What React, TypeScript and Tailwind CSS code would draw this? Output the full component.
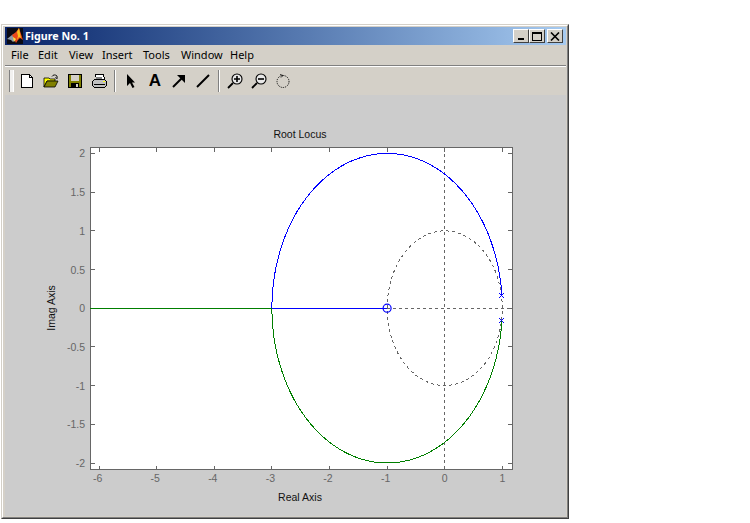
// MATLAB "Figure No. 1" window with a root locus plot.
const menus = ["File", "Edit", "View", "Insert", "Tools", "Window", "Help"];
const menuGap = ["w-[27px]", "w-[31px]", "w-[33px]", "w-[41px]", "w-[38px]", "w-[49px]", "w-[36px]"];

const toX = (x: number) => 444.7 + 57.6 * x;
const toY = (y: number) => 308.2 - 77.4 * y;

// locus is a circle of radius 2 round s = -1, sampled coarsely like the original
const arc = (sign: number) => {
  const pts: string[] = [];
  for (let deg = 180; deg > 4.7; deg -= 3.5) {
    const t = (deg * Math.PI) / 180;
    pts.push(`${toX(-1 + 2 * Math.cos(t)).toFixed(1)},${toY(sign * 2 * Math.sin(t)).toFixed(1)}`);
  }
  pts.push(`${toX(0.993).toFixed(1)},${toY(sign * 0.165).toFixed(1)}`);
  return pts.join(" ");
};

const unitCircle = Array.from({ length: 73 }, (_, i) => {
  const t = (i * 5 * Math.PI) / 180;
  return `${toX(Math.cos(t)).toFixed(1)},${toY(Math.sin(t)).toFixed(1)}`;
}).join(" ");

const xTicks = [-6, -5, -4, -3, -2, -1, 0, 1];
const yTicks = [2, 1.5, 1, 0.5, 0, -0.5, -1, -1.5, -2];

const L = 90;
const R = 512.5;
const T = 147.5;
const B = 469.5;

function RootLocus() {
  return (
    <svg viewBox="5 95 561 421" className="block h-full w-full" style={{ fontFamily: '"Liberation Sans", Arial, sans-serif' }}>
      <rect x={L} y={T} width={R - L} height={B - T} fill="#ffffff" stroke="#666666" shapeRendering="crispEdges" />
      <g stroke="#666666" shapeRendering="crispEdges">
        {xTicks.map((v) => (
          <g key={v}>
            <line x1={toX(v)} x2={toX(v)} y1={T} y2={T + 4} />
            <line x1={toX(v)} x2={toX(v)} y1={B} y2={B - 4} />
          </g>
        ))}
        {yTicks.map((v) => (
          <g key={v}>
            <line x1={L} x2={L + 5} y1={toY(v)} y2={toY(v)} />
            <line x1={R} x2={R - 5} y1={toY(v)} y2={toY(v)} />
          </g>
        ))}
      </g>
      <g fill="none" stroke="#666666" strokeDasharray="3 3" shapeRendering="crispEdges">
        <line x1={toX(0)} x2={toX(0)} y1={T} y2={B} />
        <line x1={toX(-1)} x2={R} y1={toY(0)} y2={toY(0)} />
        <polyline points={unitCircle} />
      </g>
      <line x1={L} x2={toX(-3)} y1={toY(0)} y2={toY(0)} stroke="#007f00" shapeRendering="crispEdges" />
      <line x1={toX(-3)} x2={toX(-1)} y1={toY(0)} y2={toY(0)} stroke="#0000ff" shapeRendering="crispEdges" />
      <polyline points={arc(1)} fill="none" stroke="#0000ff" shapeRendering="crispEdges" />
      <polyline points={arc(-1)} fill="none" stroke="#007f00" shapeRendering="crispEdges" />
      <circle cx={toX(-1)} cy={toY(0)} r="4" fill="none" stroke="#0000ff" strokeWidth="1.2" />
      <g stroke="#0000ff" shapeRendering="crispEdges">
        <path d="M499 293l5 5m0-5l-5 5" />
        <path d="M499 318l5 5m0-5l-5 5" />
      </g>
      <g fontSize="10.5" fill="#666666">
        {xTicks.map((v) => (
          <text key={v} x={toX(v) - (v < 0 ? 1.5 : 0)} y={481.5} textAnchor="middle">
            {v}
          </text>
        ))}
        {yTicks.map((v) => (
          <text key={v} x={85} y={toY(v) + 4} textAnchor="end">
            {v}
          </text>
        ))}
      </g>
      <g fontSize="10.5" fill="#111111" textAnchor="middle">
        <text x={300} y={138}>Root Locus</text>
        <text x={300} y={501}>Real Axis</text>
        <text transform="translate(55 308) rotate(-90)">Imag Axis</text>
      </g>
    </svg>
  );
}

const MatlabLogo = () => (
  <svg viewBox="0 0 16 16" className="h-4 w-4 shrink-0">
    <rect width="16" height="16" fill="#0b0b14" />
    <path d="M0 11l5-4 2-1 2 5-3 3-2-2z" fill="#8f9aa8" />
    <path d="M5 7l4-3 3-4 2 6 2 6-3-2-2 2-2 3-2-4z" fill="#e8471a" />
    <path d="M10 4l2-4 1 5 1 5-2-1-2 3 1-4z" fill="#f6c21c" />
    <path d="M6 9l3 2-2 3z" fill="#f9e24a" />
  </svg>
);

const CapButton = ({ children, className = "" }: { children: React.ReactNode; className?: string }) => (
  <div
    className={`flex h-[14px] w-[16px] items-center justify-center border border-t-white border-l-white border-r-[#404040] border-b-[#404040] bg-[#d4d0c8] ${className}`}
  >
    {children}
  </div>
);

const Tool = ({ children, w = "w-[24px]" }: { children: React.ReactNode; w?: string }) => (
  <div className={`flex h-[16px] items-center justify-center ${w}`}>{children}</div>
);

const ToolSep = () => <div className="mr-[2px] ml-[3px] h-[22px] w-[2px] border-l border-r border-l-[#808080] border-r-white" />;

function Toolbar() {
  return (
    <div className="flex h-[28px] items-center bg-[#d4d0c8] pb-[1px] pl-[4px]">
      <div className="h-[22px] w-[5px] border-l border-r border-l-[#808080] border-r-white bg-white/70" />
      <div className="w-[1px]" />
      <Tool>
        <svg viewBox="0 0 16 16" className="h-4 w-4" shapeRendering="crispEdges">
          <path d="M2.5 1.5h8l3 3v10h-11z" fill="#fff" stroke="#000" />
          <path d="M10.5 1.5v3h3" fill="none" stroke="#000" />
        </svg>
      </Tool>
      <Tool>
        <svg viewBox="0 0 16 16" className="h-4 w-4">
          <path d="M1 14V5h5l1 1h5v2H4l-3 6z" fill="#ffff00" stroke="#000" strokeWidth="0.8" />
          <path d="M1 14l3-6h11l-3 6z" fill="#808000" stroke="#000" strokeWidth="0.8" />
          <path d="M9 3.5C10 1.5 12.5 1.5 14 3l.2 2.6M14.2 5.6l-2-1" fill="none" stroke="#000" strokeWidth="0.9" />
        </svg>
      </Tool>
      <Tool>
        <svg viewBox="0 0 16 16" className="h-4 w-4" shapeRendering="crispEdges">
          <rect x="1.5" y="1.5" width="13" height="13" fill="#808000" stroke="#000" />
          <rect x="4" y="2" width="8" height="6" fill="#d4d0c8" />
          <rect x="4" y="10" width="8" height="4" fill="#000" />
          <rect x="9" y="11" width="2" height="3" fill="#d4d0c8" />
        </svg>
      </Tool>
      <Tool>
        <svg viewBox="0 0 16 16" className="h-4 w-4" shapeRendering="crispEdges">
          <path d="M4.5 1.5h8l1 5h-8z" fill="#fff" stroke="#000" />
          <path d="M1.5 8.5l2-2h10l2 2v4l-2 2h-10l-2-2z" fill="#c0c0c0" stroke="#000" />
          <path d="M3 11h11" stroke="#000" />
          <path d="M12 8h2v1h-2z" fill="#ffff00" />
          <path d="M5 4h6M5 5h6" stroke="#808080" />
        </svg>
      </Tool>
      <ToolSep />
      <div className="w-[1px]" />
      <Tool>
        <svg viewBox="0 0 16 16" className="h-4 w-4">
          <path d="M4 1v12l3-3 2.5 5 2-1-2.5-4.5H12z" fill="#000" />
        </svg>
      </Tool>
      <Tool>
        <span className="text-[17px] leading-none font-bold text-black">A</span>
      </Tool>
      <Tool>
        <svg viewBox="0 0 16 16" className="h-4 w-4">
          <path d="M2 14L12 4" stroke="#000" strokeWidth="2" />
          <path d="M6 2h8v8z" fill="#000" />
        </svg>
      </Tool>
      <Tool>
        <svg viewBox="0 0 16 16" className="h-4 w-4">
          <path d="M2 14L14 2" stroke="#000" strokeWidth="2" />
        </svg>
      </Tool>
      <ToolSep />
      <div className="w-[1px]" />
      <Tool>
        <svg viewBox="0 0 16 16" className="h-4 w-4">
          <circle cx="10" cy="6" r="5" fill="#e8e8e8" stroke="#000" strokeWidth="1.1" />
          <path d="M10 3v6M7 6h6" stroke="#000" strokeWidth="1.6" />
          <path d="M1 15l5-5" stroke="#000" strokeWidth="1.8" />
        </svg>
      </Tool>
      <Tool>
        <svg viewBox="0 0 16 16" className="h-4 w-4">
          <circle cx="10" cy="6" r="5" fill="#e8e8e8" stroke="#000" strokeWidth="1.1" />
          <path d="M7 6h6" stroke="#000" strokeWidth="1.6" />
          <path d="M1 15l5-5" stroke="#000" strokeWidth="1.8" />
        </svg>
      </Tool>
      <Tool>
        <svg viewBox="0 0 16 16" className="h-4 w-4">
          <circle cx="8" cy="8.5" r="6" fill="none" stroke="#000" strokeWidth="1" strokeDasharray="1 1" />
          <path d="M5 1.5l3 1-2 2" fill="none" stroke="#000" strokeWidth="0.8" />
        </svg>
      </Tool>
    </div>
  );
}

export default function App() {
  return (
    <div className="h-[523px] w-[750px] overflow-hidden bg-white pt-[24px] pl-[1px] font-['Liberation_Sans',Arial,sans-serif]">
      <div className="h-[495px] w-[568px] border border-t-[#d4d0c8] border-r-[#404040] border-b-[#404040] border-l-[#d4d0c8]">
        <div className="flex h-full w-full flex-col border border-t-white border-r-[#808080] border-b-[#808080] border-l-white bg-[#d4d0c8] pt-[1px] pr-[1px] pb-[1px] pl-[2px]">
          <div className="flex h-[18px] shrink-0 items-center bg-gradient-to-r from-[#0a246a] to-[#a6caf0] pr-[3px] pl-[2px]">
            <MatlabLogo />
            <span className="ml-[2px] font-['Noto_Sans',sans-serif] text-[10.7px] leading-none font-bold text-white">Figure No. 1</span>
            <div className="ml-auto flex items-center">
              <CapButton>
                <div className="mt-[6px] mr-[1px] h-[2px] w-[6px] bg-black" />
              </CapButton>
              <CapButton>
                <div className="h-[9px] w-[10px] border border-t-2 border-black" />
              </CapButton>
              <CapButton className="ml-[2px]">
                <svg viewBox="0 0 10 9" className="h-[9px] w-[10px]">
                  <path d="M1 0.5l8 8m0-8l-8 8" stroke="#000" strokeWidth="1.6" />
                </svg>
              </CapButton>
            </div>
          </div>
          <div className="flex h-[20px] shrink-0 items-center pb-[2px] pl-[6px] font-['Noto_Sans',sans-serif] text-[11px] leading-none text-black">
            {menus.map((m, i) => (
              <span key={m} className={menuGap[i]}>
                {m}
              </span>
            ))}
          </div>
          <div className="h-[2px] shrink-0 border-t border-b border-t-[#808080] border-b-white" />
          <Toolbar />
          <div className="min-h-0 flex-1 bg-[#cccccc]">
            <RootLocus />
          </div>
        </div>
      </div>
    </div>
  );
}
